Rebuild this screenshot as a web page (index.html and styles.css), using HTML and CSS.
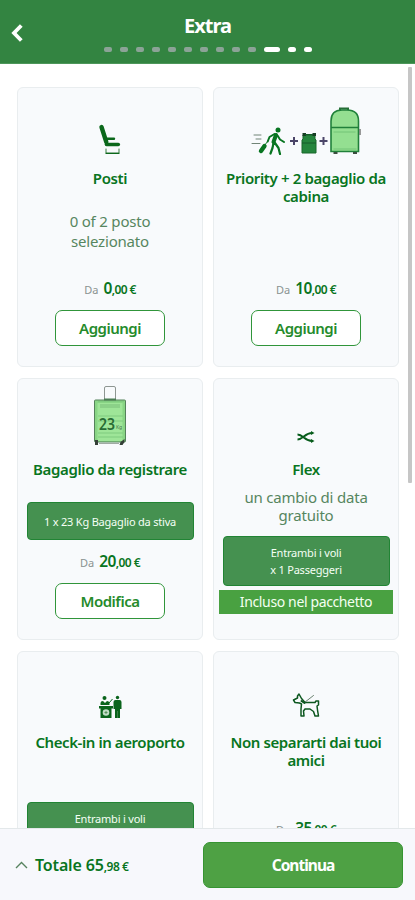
FILE: index.html
```html
<!DOCTYPE html>
<html lang="it">
<head>
<meta charset="utf-8">
<meta name="viewport" content="width=device-width, initial-scale=1">
<title>Extra</title>
<link rel="stylesheet" href="styles.css">
</head>
<body>
<div class="app">
  <header class="header">
    <svg class="back" width="14" height="20" viewBox="0 0 14 20"><path d="M11.300 2.500 4 10l7.300 7.500" fill="none" stroke="#fff" stroke-width="3.800"/></svg>
    <h1 class="heading">Extra</h1>
    <div class="steps">
      <i></i><i></i><i></i><i></i><i></i><i></i><i></i><i></i><i></i><i></i><i class="current"></i><i class="next"></i><i class="next"></i>
    </div>
  </header>
  <main class="content">
    <div class="grid">
      <section class="card">
        <div class="icon">
          <svg width="24" height="32" viewBox="0 0 24 32"><g fill="none" stroke="#0b681b" stroke-linecap="round" stroke-linejoin="round"><path d="M3.500 4 8.300 19" stroke-width="4.400"/><path d="M8.500 21.500h11.800" stroke-width="3.600"/><path d="M9.500 15.700h6.500" stroke-width="2.400"/><path d="M8 26v4.200h13V26" stroke="#387c43" stroke-width="1"/><path d="M8 30.300h13" stroke-width="1.200"/></g></svg>
        </div>
        <h2 class="title">Posti</h2>
        <p class="desc desc-low">0 of 2 posto<br>selezionato</p>
        <div class="action"><p class="price"><small>Da</small><b>0</b><em>,00 €</em></p><button class="btn">Aggiungi</button></div>
      </section>
      <section class="card">
        <div class="icon">
          <svg width="111" height="48" viewBox="0 0 111 48">
            <g stroke="#087521" fill="none" stroke-linecap="round" stroke-linejoin="round">
              <path d="M3 28h7M5 32h5M1 36.500h8" stroke="#718477" stroke-width="1"/>
              <circle cx="27" cy="23" r="2.500" fill="#087521" stroke="none"/>
              <path d="m25 28-2.500 7" stroke-width="4"/>
              <path d="m23.500 27-5 3-1.800 4.500M26.500 28.500l2.500 4 4 2.500" stroke-width="2"/>
              <path d="m22.500 36-1 5-2 5.500M24 36l3.500 5 1.500 6" stroke-width="2.200"/>
              <path d="m17 34-4 5" stroke-width="1"/><path d="m13.500 39-3.500 5" stroke-width="4.400"/>
            </g>
            <path d="M43 30v8M39 34h8M72.500 30v8M68.500 34h8" stroke="#4b4568" stroke-width="2"/>
            <path d="M52 28h12v4l1 1v13H51V33l1-1z" fill="#25853d" stroke="#18662b"/>
            <path d="M51.500 26H55v3h-3.500zM61.500 26H65v3h-3.500z" fill="#173d24"/><path d="M54 27.500h8M51 36h14" stroke="#165a2a" fill="none"/>
            <path d="M89 3V1.500h8V3" fill="none" stroke="#266d36" stroke-width="2"/>
            <path d="M80 44.500V14Q80 3 91 3h5q11.500 0 11.500 11v30.500z" fill="#94df91" stroke="#20803a" stroke-width="1.600"/>
            <path d="M80 20.500h27.500" stroke="#20803a" stroke-width="1.500"/><path d="M82.500 25h22M82.500 42h23" stroke="#72c477"/><path d="M109 22v6" stroke="#777" stroke-width="1.500"/>
            <path d="M82.500 46h4M102 46h4" stroke="#3b4d3f" stroke-width="2"/>
          </svg>
        </div>
        <h2 class="title">Priority + 2 bagaglio da<br>cabina</h2>
        <div class="action"><p class="price"><small>Da</small><b>10</b><em>,00 €</em></p><button class="btn">Aggiungi</button></div>
      </section>
      <section class="card">
        <div class="icon">
          <svg width="34" height="62" viewBox="0 0 34 62">
            <path d="M11.500 15V4Q11.500 2.500 13 2.500h8q1.500 0 1.500 1.500v11" fill="none" stroke="#8e9692"/>
            <rect x="1.500" y="16" width="31" height="42" rx="1" fill="#89d585" stroke="#55825b"/>
            <rect x="4.500" y="19" width="25" height="38" fill="#9ee598"/>
            <path d="M7 20h20v4H7z" fill="#8bd188"/><path d="M5 17.500h26M5 32h25M5 37h25M5 49h25M5 53h25" stroke="#7fcb7f" stroke-width="1"/>
            <path d="M11 15.500h12" stroke="#4a7d53" stroke-width="2"/>
            <text x="6" y="46" class="bag-num" textLength="16" lengthAdjust="spacingAndGlyphs">23</text><text x="23" y="44.500" class="bag-kg" textLength="6">Kg</text>
            <path d="M2 56h3v5H2zM27.500 58l4-3v3l-2 3h-3z" fill="#343f37"/><path d="M6 59.500h20" stroke="#a1aaa4"/>
          </svg>
        </div>
        <h2 class="title">Bagaglio da registrare</h2>
        <div class="action"><div class="badge badge-bag">1 x 23 Kg Bagaglio da stiva</div><p class="price"><small>Da</small><b>20</b><em>,00 €</em></p><button class="btn">Modifica</button></div>
      </section>
      <section class="card">
        <div class="icon icon-flex">
          <svg width="20" height="14" viewBox="0 0 20 14"><g fill="none" stroke="#075c1b" stroke-width="1.900"><path d="M1.500 4.500C7 4.500 9 11 16 11M1.500 9.500C7 9.500 9 3 16 3"/></g><path d="m15 1 3.500 2L15 5zM15 9l3.500 2-3.500 2z" fill="#075c1b"/></svg>
        </div>
        <h2 class="title">Flex</h2>
        <p class="desc desc-near">un cambio di data<br>gratuito</p>
        <div class="badge badge-flex"><span>Entrambi i voli</span><span>x 1 Passeggeri</span></div>
        <div class="included">Incluso nel pacchetto</div>
      </section>
      <section class="card">
        <div class="icon">
          <svg width="24" height="24" viewBox="0 0 24 24" fill="#0a641c"><circle cx="6.500" cy="3" r="2"/><path d="M2.500 10V8q0-2 2.500-2l2 2 2-2q2 0 2.500 2v2z"/><path d="m11 8 3.500-4" stroke="#0a641c" stroke-width="1"/><path d="M1 11h14v2.500h-1.500V23h-11v-9.500H1z"/><circle cx="8" cy="17.500" r="3.300" fill="#c1ddc6"/><path d="M6.500 17.500h3M8 16v3" stroke="#58925f"/><circle cx="19.500" cy="2.500" r="1.700"/><path d="M17.500 5h4q2 0 2 2v7H22v9h-5v-9h-1.500V7q0-2 2-2z"/><path d="M19.500 16v7" stroke="#6f9d77" stroke-width=".5"/></svg>
        </div>
        <h2 class="title title-row3">Check-in in aeroporto</h2>
        <div class="badge badge-check"><span>Entrambi i voli</span><span>x 1 Passeggeri</span></div>
      </section>
      <section class="card">
        <div class="icon icon-pet">
          <svg width="28" height="26" viewBox="0 0 28 26"><g fill="none" stroke="#0c571f" stroke-width="1.500" stroke-linejoin="round" stroke-linecap="round"><path d="M5.500 4 7 2l2.500 4.500 3.500 4h10l1-1.500h2.500v4L25 14l.5 4 1 6h-3.500l-1.500-4.500-3.500-2.500h-5L11.500 19l.5 5H9v-7l.500-5-2-1-4.500-.500L1.500 8l4-2z"/><path d="m12.500 10.500 9-7" stroke="#59735f" stroke-width=".9"/><path d="m9.500 9 3 2" stroke-width="2"/></g></svg>
        </div>
        <h2 class="title title-row3">Non separarti dai tuoi<br>amici</h2>
        <p class="price price-pet"><small>Da</small><b>35</b><em>,00 €</em></p>
      </section>
    </div>
    <div class="scrollbar"></div>
  </main>
  <footer class="footer">
    <div class="total"><svg width="13" height="8" viewBox="0 0 13 8"><path d="m1 7 5.500-5.500L12 7" fill="none" stroke="#56835f" stroke-width="1.400"/></svg><strong>Totale 65</strong><em>,98 €</em></div>
    <button class="continue">Continua</button>
  </footer>
</div>
</body>
</html>
```
FILE: styles.css
```css
* { box-sizing: border-box; }
html, body { margin: 0; height: 900px; overflow: hidden; }
body { font-family: "Noto Sans", "Liberation Sans", sans-serif; background: #fff; color: #087521; }
h1, h2, p { margin: 0; }
button { font-family: inherit; }
em { font-style: normal; }
.app { width: 415px; height: 900px; display: flex; flex-direction: column; overflow: hidden; }
.header { position: relative; height: 64px; flex: none; background: #338441; border-bottom: 1px solid #4d965a; padding-top: 13px; }
.back { position: absolute; left: 10px; top: 22.5px; }
.heading { height: 26px; line-height: 26px; font-size: 20px; font-weight: 700; color: #fff; text-align: center; letter-spacing: -1px; }
.steps { display: flex; gap: 8px; margin: 7.5px 0 0 104px; }
.steps i { width: 8px; height: 5px; border-radius: 2px; background: #8ca397; }
.steps i.current { width: 16px; background: #fff; border-radius: 3px; }
.steps i.next { background: #fff; border-radius: 3px; }
.content { position: relative; flex: 1; min-height: 0; overflow: hidden; padding: 23px 16px 0 17px; }
.grid { display: grid; grid-template-columns: 186px 186px; grid-template-rows: 280px 262px 262px; gap: 11px 10px; }
.card { display: flex; flex-direction: column; align-items: center; min-width: 0; background: #f8fafc; border: 1px solid #e9edef; border-radius: 6px; text-align: center; overflow: hidden; }
.icon { height: 81px; flex: none; display: flex; align-items: flex-end; padding-bottom: 14px; }
.icon-flex { padding-bottom: 16px; }
.icon-pet { padding-bottom: 15px; }
.title { font-size: 15px; line-height: 18px; font-weight: 600; white-space: nowrap; color: #087521; letter-spacing: -.37px; }
.title-row3 { letter-spacing: -.42px; }
.desc { font-size: 15px; font-weight: 400; color: #56865f; white-space: nowrap; letter-spacing: -.2px; }
.desc-low { margin-top: 24px; line-height: 20px; }
.desc-near { margin-top: 10px; line-height: 18px; }
.action { display: flex; flex-direction: column; align-items: center; margin-top: auto; padding-bottom: 20px; }
.price { display: flex; justify-content: center; align-items: baseline; height: 22px; line-height: 22px; margin-bottom: 11px; white-space: nowrap; }
.price small { font-size: 11px; color: #8a9391; margin-right: 5px; }
.price b { font-size: 15.5px; font-weight: 600; letter-spacing: -.6px; }
.price em { font-size: 12px; font-weight: 600; letter-spacing: -.6px; }
.btn { width: 110px; height: 36px; border: 1.5px solid #30953a; border-radius: 7px; background: #fff; color: #258b2b; font-size: 15px; line-height: 20px; font-weight: 600; padding: 0 0 1px; letter-spacing: -.5px; }
.badge { width: 167px; flex: none; display: flex; flex-direction: column; align-items: center; justify-content: center; border: 1px solid #218434; border-radius: 4px; background: #459150; color: #f5fff5; font-size: 11px; line-height: 17px; white-space: nowrap; letter-spacing: -.2px; }
.badge-bag { height: 38px; margin-bottom: 10px; }
.badge-flex { height: 50px; margin-top: 12px; }
.badge-check { height: 50px; margin-top: 51px; }
.included { width: 174px; height: 24px; flex: none; margin-top: 4px; background: #49a141; color: #f4fff1; font-size: 14px; line-height: 23px; letter-spacing: -.37px; white-space: nowrap; }
.price-pet { margin-top: 48px; }
.bag-num { font-size: 16px; font-weight: 600; fill: #286b34; }
.bag-kg { font-size: 5px; fill: #43734b; }
.scrollbar { position: absolute; left: 408px; top: 3px; width: 4px; height: 416px; background: #c6c6c6; border-radius: 1px; }
.footer { height: 72px; flex: none; display: flex; align-items: center; justify-content: space-between; padding: 1px 12px 0 15px; background: #f7f8fc; border-top: 1px solid #e3e8ea; }
.total { display: flex; align-items: baseline; height: 26px; line-height: 26px; white-space: nowrap; }
.total svg { align-self: center; margin-right: 7px; }
.total strong { font-size: 16px; font-weight: 600; letter-spacing: -.15px; }
.total em { font-size: 12px; font-weight: 600; letter-spacing: -.5px; }
.continue { width: 200px; height: 46px; border: 1px solid #369432; border-radius: 7px; background: #4ea144; color: #fff; font-size: 15.5px; font-weight: 700; line-height: 22px; padding: 0 0 1px; letter-spacing: -1px; }
```
